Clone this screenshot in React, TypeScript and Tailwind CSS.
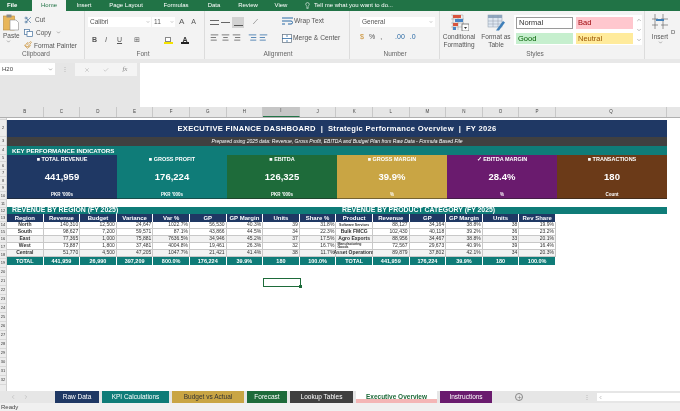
import {
  AlignCenter,
  AlignLeft,
  AlignRight,
  Check,
  ChevronDown,
  ChevronLeft,
  ChevronRight,
  Lightbulb,
  Paintbrush,
  Plus,
  Scissors,
  X,
} from "lucide-react";

const FONT = "font-['Liberation_Sans',Arial,sans-serif]";

const ribbonTabs = [
  { label: "Insert", w: "w-[36px]" },
  { label: "Page Layout", w: "w-[48px]" },
  { label: "Formulas", w: "w-[52px]" },
  { label: "Data", w: "w-[24px]" },
  { label: "Review", w: "w-[44px]" },
  { label: "View", w: "w-[22px]" },
];

const columns = ["B", "C", "D", "E", "F", "G", "H", "I", "J", "K", "L", "M", "N", "O", "P", "Q"];

const rowHeights = [2, 17, 9, 9, 7, 8, 7, 8, 7, 8, 8, 7, 7, 7, 7, 7, 8, 8, 9, 9, 9, 9, 9, 9, 9, 9, 9, 9, 9, 9, 9, 9];

const kpis = [
  { title: "TOTAL REVENUE", icon: "■", value: "441,959", foot: "PKR '000s", bg: "bg-[#1f3864]" },
  { title: "GROSS PROFIT", icon: "■", value: "176,224", foot: "PKR '000s", bg: "bg-[#0f7c78]" },
  { title: "EBITDA", icon: "■", value: "126,325", foot: "PKR '000s", bg: "bg-[#1e6b3a]" },
  { title: "GROSS MARGIN", icon: "■", value: "39.9%", foot: "%", bg: "bg-[#c9a544]" },
  { title: "EBITDA MARGIN", icon: "✓", value: "28.4%", foot: "%", bg: "bg-[#6a1b6e]" },
  { title: "TRANSACTIONS", icon: "■", value: "180", foot: "Count", bg: "bg-[#6b3a18]" },
];

const regionHead = ["Region", "Revenue", "Budget", "Variance", "Var %", "GP", "GP Margin", "Units", "Share %"];
const productHead = ["Product", "Revenue", "GP", "GP Margin", "Units", "Rev Share"];

const rows = [
  {
    region: ["North", "140,310", "12,500", "24,647", "1022.7%", "56,530", "40.3%", "39", "31.8%"],
    product: ["Software Services", "88,127", "34,164", "38.8%", "38", "19.9%"],
  },
  {
    region: ["South", "98,627", "7,200", "59,571", "87.1%", "43,866", "44.5%", "34", "22.3%"],
    product: ["Bulk FMCG", "102,430", "40,118", "39.2%", "36", "23.2%"],
  },
  {
    region: ["East", "77,365", "1,000", "75,881", "7636.5%", "34,946", "45.2%", "37", "17.5%"],
    product: ["Agro Exports", "88,956", "34,467", "38.8%", "33", "20.1%"],
  },
  {
    region: ["West", "73,887", "1,800", "37,481", "4004.8%", "19,461", "26.3%", "32", "16.7%"],
    product: ["Manufacturing Goods", "72,567", "29,673", "40.9%", "39", "16.4%"],
  },
  {
    region: ["Central", "51,770", "4,500", "47,205", "1047.7%", "21,421", "41.4%", "38", "11.7%"],
    product: ["Asset Operations", "89,879", "37,802", "42.1%", "34", "20.3%"],
  },
];

const regionTotal = ["TOTAL", "441,959", "26,990", "397,209", "800.0%", "176,224", "39.9%", "180", "100.0%"];
const productTotal = ["TOTAL", "441,959", "176,224", "39.9%", "180", "100.0%"];

const tabs = [
  { label: "Raw Data", w: "w-[44px]", cls: "bg-[#1f3864] text-white" },
  { label: "KPI Calculations", w: "w-[67px]", cls: "bg-[#0f7c78] text-white" },
  { label: "Budget vs Actual", w: "w-[72px]", cls: "bg-[#c9a544] text-[#333]" },
  { label: "Forecast", w: "w-[40px]", cls: "bg-[#1e6b3a] text-white" },
  { label: "Lookup Tables", w: "w-[63px]", cls: "bg-[#404040] text-white" },
  {
    label: "Executive Overview",
    w: "w-[81px]",
    cls: "bg-[linear-gradient(#ffffff_70%,#f4b6b6_70%)] text-[#1e6b3a] font-bold",
  },
  { label: "Instructions", w: "w-[52px]", cls: "bg-[#6a1b6e] text-white" },
];

function PasteIcon() {
  return (
    <svg viewBox="0 0 16 17" className="h-[17px] w-[16px]">
      <rect x="0.5" y="2" width="11" height="14" fill="#e8b65a" stroke="#b98a37" strokeWidth="0.6" />
      <rect x="3.5" y="0.5" width="5" height="3" fill="#8a8a8a" />
      <path d="M7 6h6l2.500 2.500V16H7z" fill="#fff" stroke="#8a8a8a" strokeWidth="0.6" />
    </svg>
  );
}

function CopyIcon() {
  return (
    <svg viewBox="0 0 9 8" className="h-2 w-[9px]">
      <rect x="0.5" y="0.5" width="5" height="5" fill="#fff" stroke="#44709c" strokeWidth="0.7" />
      <rect x="3" y="2.5" width="5.5" height="5" fill="#fff" stroke="#44709c" strokeWidth="0.7" />
    </svg>
  );
}

function WrapIcon() {
  return (
    <svg viewBox="0 0 11 8" className="h-2 w-[11px]">
      <path d="M0 1h11M0 4h9a1.500 1.500 0 0 1 0 3H6M0 7h3" fill="none" stroke="#2b6aa5" strokeWidth="1" />
    </svg>
  );
}

function MergeIcon() {
  return (
    <svg viewBox="0 0 10 9" className="h-[9px] w-[10px]">
      <rect x="0.5" y="0.5" width="9" height="8" fill="#fff" stroke="#5f6f80" strokeWidth="0.7" />
      <path d="M0 4.500h10M5 1v2M5 6v2" stroke="#2b6aa5" strokeWidth="0.8" />
    </svg>
  );
}

function ConditionalIcon() {
  return (
    <svg viewBox="0 0 19 17" className="h-[17px] w-[19px]">
      <path d="M1 1h12M1 5h13M1 9h13M1 13h13M3 1v15M8 1v15M13 1v15" stroke="#9a9a9a" strokeWidth="0.5" />
      <rect x="3" y="1" width="8" height="3" fill="#d8553f" />
      <rect x="5" y="5" width="8" height="3" fill="#4a86c6" />
      <rect x="3" y="9" width="5" height="3" fill="#d8553f" />
      <rect x="3" y="13" width="3" height="3" fill="#4a86c6" />
      <rect x="12" y="10" width="7" height="7" fill="#fff" stroke="#555" strokeWidth="0.7" />
      <path d="M14 13l1.500 2 1.500-2z" fill="#333" />
    </svg>
  );
}

function FormatTableIcon() {
  return (
    <svg viewBox="0 0 19 17" className="h-[17px] w-[19px]">
      <rect x="1" y="1" width="14" height="12" fill="#dfe8f2" stroke="#8c9bab" strokeWidth="0.5" />
      <rect x="1" y="1" width="14" height="3" fill="#8fa6bf" />
      <path d="M1 7h14M1 10h14M6 1v12M11 1v12" stroke="#8c9bab" strokeWidth="0.5" />
      <path d="M10 15l6-8 2 1.500-6 8H9z" fill="#3f7fb9" />
    </svg>
  );
}

function InsertIcon() {
  return (
    <svg viewBox="0 0 16 16" className="h-4 w-4">
      <path d="M0 5h6M9 5h7M0 11h6M9 11h7M3 0v15M11 0v15" stroke="#6b6b6b" strokeWidth="0.7" fill="none" />
      <rect x="4" y="5" width="8" height="2" fill="#3f7fb9" />
    </svg>
  );
}

function GroupLabel({ label, w }: { label: string; w: string }) {
  return <div className={`${w} text-center text-[6.5px] leading-[8px] text-[#666]`}>{label}</div>;
}

function Ribbon() {
  return (
    <div className="flex h-[48px] shrink-0 bg-[#f3f3f3] text-[6.5px] text-[#555]">
      {/* Clipboard */}
      <div className="flex w-[85px] shrink-0 flex-col border-r border-[#dcdcdc]">
        <div className="flex h-[39px] pl-[3px] pt-[3px]">
          <div className="flex w-[21px] flex-col items-start">
            <PasteIcon />
            <span className="mt-[1px] leading-[7px]">Paste</span>
            <ChevronDown className="ml-[3px] h-[5px] w-[5px]" />
          </div>
          <div className="flex flex-col gap-[3px] pt-[1px]">
            <div className="flex items-center gap-[3px]">
              <Scissors className="h-2 w-2 text-[#44709c]" />
              <span>Cut</span>
            </div>
            <div className="flex items-center gap-[3px]">
              <CopyIcon />
              <span>Copy</span>
              <ChevronDown className="ml-[2px] h-[5px] w-[5px]" />
            </div>
            <div className="flex items-center gap-[2px]">
              <Paintbrush className="h-2 w-2 text-[#c98d2e]" />
              <span className="whitespace-nowrap">Format Painter</span>
            </div>
          </div>
        </div>
        <GroupLabel label="Clipboard" w="w-[72px]" />
      </div>
      {/* Font */}
      <div className="flex w-[120px] shrink-0 flex-col border-r border-[#dcdcdc] pl-[3px]">
        <div className="flex h-[19px] items-center gap-[1px] pt-[3px]">
          <div className="flex h-[10px] w-[63px] items-center justify-between bg-white pl-[2px] pr-[1px]">
            Calibri <ChevronDown className="h-[4px] w-[4px]" />
          </div>
          <div className="flex h-[10px] w-[23px] items-center justify-between bg-white pl-[2px] pr-[1px]">
            11 <ChevronDown className="h-[4px] w-[4px]" />
          </div>
          <span className="ml-[3px] text-[8px]">A</span>
          <span className="ml-[6px] text-[7px]">A</span>
        </div>
        <div className="flex h-[20px] items-center pl-[4px] text-[7px]">
          <span className="w-[13px] font-bold">B</span>
          <span className="w-[12px] italic">I</span>
          <span className="w-[17px] underline">U</span>
          <span className="w-[24px]">⊞</span>
          <span className="flex w-[20px] flex-col items-center">
            <span className="h-[5px] w-[6px] border border-[#888] bg-white" />
            <span className="h-[2px] w-[9px] bg-[#f5e300]" />
          </span>
          <span className="flex w-[14px] flex-col items-center font-bold leading-[5px] text-[#333]">
            A
            <span className="h-[2px] w-[8px] bg-[#222]" />
          </span>
        </div>
        <GroupLabel label="Font" w="w-[110px]" />
      </div>
      {/* Alignment */}
      <div className="flex w-[145px] shrink-0 flex-col border-r border-[#dcdcdc] pl-[5px]">
        <div className="flex h-[39px]">
          <div className="flex w-[72px] flex-col">
            <div className="flex h-[19px] items-center gap-[2px] pt-[3px]">
              <span className="h-[5px] w-[9px] border-y border-[#666]" />
              <span className="h-[1px] w-[9px] bg-[#666]" />
              <span className="flex h-[11px] w-[12px] items-end justify-center bg-[#d2d2d2] pb-[2px]">
                <span className="h-[1px] w-[9px] bg-[#555]" />
              </span>
              <span className="ml-[7px] text-[7px]">⟋</span>
            </div>
            <div className="flex h-[15px] items-center gap-[2px]">
              <AlignLeft className="h-[9px] w-[9px]" />
              <AlignCenter className="h-[9px] w-[9px]" />
              <AlignRight className="h-[9px] w-[9px]" />
              <AlignRight className="ml-[5px] h-[9px] w-[9px] text-[#2b6aa5]" />
              <AlignLeft className="h-[9px] w-[9px] text-[#2b6aa5]" />
            </div>
          </div>
          <div className="flex flex-col gap-[7px] pt-[5px] text-[6.7px]">
            <div className="flex items-center gap-[1px]">
              <WrapIcon />
              <span className="whitespace-nowrap">Wrap Text</span>
            </div>
            <div className="flex items-center gap-[1px]">
              <MergeIcon />
              <span className="whitespace-nowrap">Merge &amp; Center</span>
            </div>
          </div>
        </div>
        <GroupLabel label="Alignment" w="w-[136px]" />
      </div>
      {/* Number */}
      <div className="flex w-[90px] shrink-0 flex-col border-r border-[#dcdcdc] pl-[10px]">
        <div className="flex h-[39px] flex-col">
          <div className="mt-[6px] flex h-[10px] w-[75px] items-center justify-between bg-white pl-[2px] pr-[2px]">
            General <ChevronDown className="h-[4px] w-[4px]" />
          </div>
          <div className="mt-[5px] flex items-center gap-[5px] text-[7px]">
            <span className="text-[#c98d2e]">$</span>
            <span>%</span>
            <span>,</span>
            <span className="ml-[8px] text-[#2b6aa5]">.00</span>
            <span className="text-[#2b6aa5]">.0</span>
          </div>
        </div>
        <GroupLabel label="Number" w="w-[70px]" />
      </div>
      {/* Styles */}
      <div className="flex w-[205px] shrink-0 flex-col border-r border-[#dcdcdc]">
        <div className="flex h-[39px]">
          <div className="flex w-[38px] flex-col items-center pt-[3px] text-center leading-[8px]">
            <ConditionalIcon />
            <span className="mt-[2px]">Conditional Formatting</span>
          </div>
          <div className="flex w-[36px] flex-col items-center pt-[3px] text-center leading-[8px]">
            <FormatTableIcon />
            <span className="mt-[2px]">Format as Table</span>
          </div>
          <div className="mt-[4px] flex h-[30px] w-[128px] bg-white pl-[2px] pt-[2px] text-[7.5px]">
            <div className="grid w-[118px] grid-cols-2 gap-x-[3px] gap-y-[3px]">
              <div className="flex h-[12px] items-center border border-[#9a9a9a] pl-[2px] text-[#333]">Normal</div>
              <div className="flex h-[12px] items-center bg-[#ffc7ce] pl-[2px] text-[#9c0006]">Bad</div>
              <div className="flex h-[11px] items-center bg-[#c6efce] pl-[2px] text-[#006100]">Good</div>
              <div className="flex h-[11px] items-center bg-[#ffeb9c] pl-[2px] text-[#9c5700]">Neutral</div>
            </div>
            <div className="ml-[3px] flex w-[6px] flex-col justify-between pb-[2px] text-[#777]">
              <ChevronDown className="h-[6px] w-[6px] rotate-180" />
              <ChevronDown className="h-[6px] w-[6px]" />
              <ChevronDown className="h-[6px] w-[6px]" />
            </div>
          </div>
        </div>
        <GroupLabel label="Styles" w="w-[190px]" />
      </div>
      {/* Cells */}
      <div className="flex flex-1 pl-[4px] pt-[3px]">
        <div className="flex w-[22px] flex-col items-center leading-[7px]">
          <InsertIcon />
          <span className="mt-[3px]">Insert</span>
          <ChevronDown className="h-[5px] w-[5px]" />
        </div>
        <span className="mt-[14px] text-[6px]">D</span>
      </div>
    </div>
  );
}

function HeaderCell({ label }: { label: string }) {
  return (
    <div className="flex h-[8px] items-center justify-center overflow-hidden whitespace-nowrap border-r border-white bg-[#1f3864] text-[6px] font-bold text-white">
      {label}
    </div>
  );
}

function BodyCell({ label, first, shade, wrap }: { label: string; first: boolean; shade: boolean; wrap: boolean }) {
  return (
    <div
      className={`flex h-[7px] items-center border-b border-r border-[#c8c8c8] px-[1px] text-[#333] ${
        first ? "justify-center font-bold" : "justify-end"
      } ${shade ? "bg-[#f2f2f2]" : "bg-white"} ${
        wrap ? "text-[3.5px] leading-[3px]" : "whitespace-nowrap text-[5px]"
      }`}
    >
      {label}
    </div>
  );
}

function TotalCell({ label }: { label: string }) {
  return (
    <div className="flex h-[8px] items-center justify-center whitespace-nowrap border-r border-white bg-[#0f7c78] text-[5.5px] font-bold text-white">
      {label}
    </div>
  );
}

function DataTable({ head, body, total }: { head: string[]; body: string[][]; total: string[] }) {
  return (
    <div className="grid grid-cols-[repeat(auto-fit,36.6px)]" style={{ width: head.length * 36.6 }}>
      {head.map((h) => (
        <HeaderCell key={h} label={h} />
      ))}
      {body.map((row, i) =>
        row.map((c, j) => (
          <BodyCell key={`${i}-${j}`} label={c} first={j === 0} shade={i % 2 === 0 && i > 0} wrap={j === 0 && c.length > 16} />
        ))
      )}
      {total.map((t, i) => (
        <TotalCell key={i} label={t} />
      ))}
    </div>
  );
}

function Sheet() {
  return (
    <div className="flex min-w-0 flex-1 flex-col overflow-hidden bg-white pt-[2px]">
      <div className="w-[660px]">
        <div className="flex h-[17px] items-center justify-center bg-[#1f3864] text-[7.6px] font-bold tracking-[0.3px] text-white">
          EXECUTIVE FINANCE DASHBOARD&nbsp; |&nbsp; Strategic Performance Overview&nbsp; |&nbsp; FY 2026
        </div>
        <div className="flex h-[9px] items-center justify-center bg-[#404040] text-[5px] italic text-white">
          Prepared using 2025 data: Revenue, Gross Profit, EBITDA and Budget Plan from Raw Data - Formula Based File
        </div>
        <div className="flex h-[9px] items-center bg-[#0f7c78] pl-[5px] text-[6.2px] font-bold text-white">
          KEY PERFORMANCE INDICATORS
        </div>
        <div className="grid h-[44px] grid-cols-6">
          {kpis.map((k) => (
            <div key={k.title} className={`${k.bg} flex flex-col items-center border-b border-[#20202080] pt-[1px] text-white`}>
              <div className="whitespace-nowrap text-[5.5px] font-bold leading-[6px]">
                {k.icon} {k.title}
              </div>
              <div className="mt-[9px] text-[9.5px] font-bold leading-[12px]">{k.value}</div>
              <div className="mt-[9px] text-[4.5px] font-bold leading-[5px]">{k.foot}</div>
            </div>
          ))}
        </div>
        <div className="mt-[8px] flex h-[7px] items-center bg-[#0f7c78] text-[6.9px] font-bold text-white">
          <div className="w-[329px] whitespace-nowrap pl-[5px]">REVENUE BY REGION (FY 2025)</div>
          <div className="whitespace-nowrap pl-[6px]">REVENUE BY PRODUCT CATEGORY (FY 2025)</div>
        </div>
        <div className="flex">
          <DataTable head={regionHead} body={rows.map((r) => r.region)} total={regionTotal} />
          <DataTable head={productHead} body={rows.map((r) => r.product)} total={productTotal} />
        </div>
        {/* active cell */}
        <div className="relative ml-[256px] mt-[13px] h-[9px] w-[38px] border border-[#1e6b3a]">
          <span className="absolute -bottom-[2px] -right-[2px] h-[3px] w-[3px] bg-[#1e6b3a]" />
        </div>
      </div>
    </div>
  );
}

export default function App() {
  return (
    <div className={`${FONT} flex h-[411px] w-[680px] flex-col overflow-hidden bg-white blur-[0.45px]`}>
      {/* title tabs */}
      <div className="flex h-[11px] shrink-0 items-center bg-[#217346] text-[6px] text-white">
        <span className="w-[32px] pl-[7px] font-bold">File</span>
        <span className="flex h-full w-[34px] items-center justify-center bg-[#f3f3f3] text-[#217346]">Home</span>
        {ribbonTabs.map((t) => (
          <span key={t.label} className={`${t.w} shrink-0 whitespace-nowrap text-center`}>
            {t.label}
          </span>
        ))}
        <Lightbulb className="ml-[12px] h-[7px] w-[7px]" />
        <span className="ml-[3px] whitespace-nowrap">Tell me what you want to do...</span>
      </div>
      <Ribbon />
      <div className="h-[4px] shrink-0 bg-[#e8e8e8]" />
      {/* formula bar */}
      <div className="flex h-[44px] shrink-0 bg-[#e6e6e6]">
        <div className="flex h-[12px] w-[55px] items-center justify-between bg-white pl-[2px] pr-[2px] text-[6px] text-[#444]">
          H20 <ChevronDown className="h-[5px] w-[5px]" />
        </div>
        <div className="w-[20px] text-center text-[6px] leading-[12px] text-[#aaa]">⋮</div>
        <div className="flex h-[13px] w-[62px] items-center justify-around bg-[#f4f4f4] px-[3px] text-[#aaa]">
          <X className="h-[6px] w-[6px]" />
          <Check className="h-[6px] w-[6px]" />
          <span className="font-['Liberation_Serif',serif] text-[7px] italic text-[#888]">fx</span>
        </div>
        <div className="ml-[3px] flex-1 bg-white" />
      </div>
      {/* column letters */}
      <div className="flex h-[11px] shrink-0 border-b border-[#b0b0b0] bg-[#e6e6e6] text-[4.5px] text-[#444]">
        <div className="w-[7px] shrink-0" />
        <div className="grid flex-1 grid-cols-[repeat(15,36.6px)_111px_1fr]">
          {columns.map((c) => (
            <div
              key={c}
              className={`flex items-center justify-center border-r border-[#c8c8c8] ${
                c === "I" ? "border-b border-b-[#217346] bg-[#c6c6c6]" : ""
              }`}
            >
              {c}
            </div>
          ))}
        </div>
      </div>
      {/* sheet */}
      <div className="flex min-h-0 flex-1">
        <div className="flex w-[7px] shrink-0 flex-col overflow-hidden border-r border-[#d0d0d0] bg-[#ececec] text-[4px] text-[#333]">
          {rowHeights.map((h, i) => (
            <div key={i} className="flex shrink-0 items-center justify-center border-b border-[#d8d8d8]" style={{ height: h }}>
              {i > 0 ? i + 1 : ""}
            </div>
          ))}
        </div>
        <Sheet />
      </div>
      {/* sheet tabs */}
      <div className="flex h-[12px] shrink-0 items-center bg-[#e6e6e6] text-[6.5px]">
        <div className="flex w-[55px] shrink-0 items-center gap-[7px] pl-[10px] text-[#aaa]">
          <ChevronLeft className="h-[6px] w-[6px]" />
          <ChevronRight className="h-[6px] w-[6px]" />
        </div>
        {tabs.map((t) => (
          <div
            key={t.label}
            className={`${t.w} ${t.cls} mr-[3px] flex h-full shrink-0 items-center justify-center whitespace-nowrap`}
          >
            {t.label}
          </div>
        ))}
        <div className="ml-[20px] flex h-[8px] w-[8px] items-center justify-center rounded-full border border-[#888] text-[#666]">
          <Plus className="h-[5px] w-[5px]" />
        </div>
        <div className="ml-[61px] text-[6px] text-[#aaa]">⋮</div>
        <div className="ml-[7px] flex h-[8px] flex-1 items-center bg-white pl-[1px] text-[#777]">
          <ChevronLeft className="h-[5px] w-[5px]" />
        </div>
      </div>
      {/* status */}
      <div className="flex h-[8px] shrink-0 items-center bg-[#f0f0f0] text-[6px] text-[#444]">
        <span className="pl-[1px]">Ready</span>
      </div>
    </div>
  );
}
